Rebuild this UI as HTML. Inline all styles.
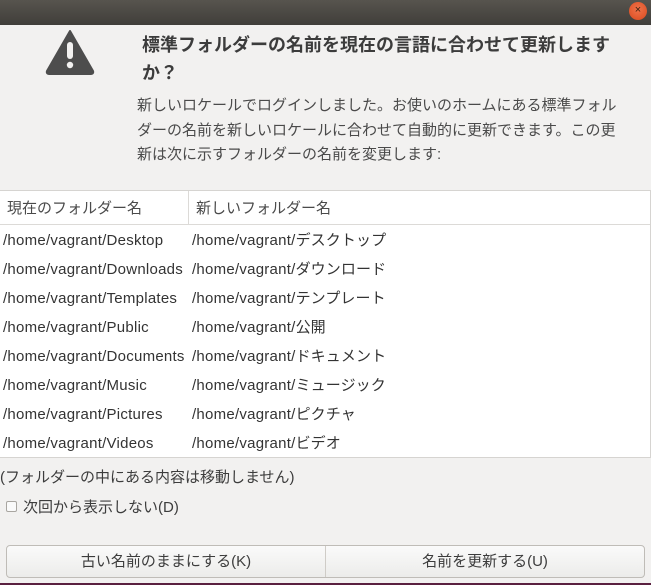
<!DOCTYPE html>
<html><head><meta charset="utf-8"><style>
*{margin:0;padding:0;box-sizing:border-box}
body{width:651px;height:585px;background:#f2f1f0;font-family:"Liberation Sans","Noto Sans CJK JP",sans-serif;color:#3c3c3c;position:relative;overflow:hidden}
.tb{position:absolute;left:0;top:0;width:651px;height:25px;background:linear-gradient(#57544e,#403e3a)}
.close{position:absolute;left:629px;top:2px;width:18px;height:18px;border-radius:50%;background:radial-gradient(circle at 50% 40%,#f0734a,#d9491e);color:#3a2010;font-size:11px;text-align:center;line-height:17px}
.t{position:absolute;font-size:15px;line-height:20px}
.title{position:absolute;left:142px;top:31px;font-size:18px;font-weight:bold;line-height:28px;color:#3c3c3c;white-space:nowrap}
.msg{position:absolute;left:137px;top:94px;font-size:15px;line-height:24.5px;white-space:nowrap;color:#4a4a4a}
.table{position:absolute;left:0;top:190px;width:651px;height:268px;background:#fff;border-top:1px solid #d6d4d1;border-bottom:1px solid #d6d4d1;border-right:1px solid #d6d4d1}
.hdr{height:34px;border-bottom:1px solid #dcdad7;position:relative}
.hdr span{position:absolute;top:8px;font-size:15px;line-height:20px;color:#4a4a4a}
.vd{position:absolute;left:188px;top:0;height:34px;border-left:1px solid #dcdad7}
.row{height:29px;position:relative;font-size:15px;letter-spacing:0.1px}
.row span{position:absolute;top:5px;line-height:20px;height:20px;color:#333;font-family:"Noto Sans CJK JP",sans-serif}
.row span b{font-weight:normal;font-family:"Liberation Sans",sans-serif;letter-spacing:0.25px}
.btns{position:absolute;left:6px;top:545px;width:639px;height:33px;border:1px solid #bfbcb7;border-radius:4px;background:linear-gradient(#fafafa,#ececea);display:flex}
.btns div{flex:1;text-align:center;line-height:31px;font-size:15px;color:#3c3c3c}
.btns div+div{border-left:1px solid #cfccc7}
.bot{position:absolute;left:0;top:583px;width:651px;height:2px;background:#5a2040}
</style></head><body>
<div class="tb"><div class="close">×</div></div>
<svg style="position:absolute;left:44px;top:29px" width="52" height="46" viewBox="0 0 52 46"><path d="M26 2 L49 42 Q50 45 46 45 L6 45 Q2 45 3 42 Z" fill="#4d4d4d" stroke="#4d4d4d" stroke-width="2" stroke-linejoin="round"/><rect x="23" y="13" width="6" height="17" rx="3" fill="#f2f1f0"/><circle cx="26" cy="36" r="3.2" fill="#f2f1f0"/></svg>
<div class="title">標準フォルダーの名前を現在の言語に合わせて更新します<br>か？</div>
<div class="msg">新しいロケールでログインしました。お使いのホームにある標準フォル<br>ダーの名前を新しいロケールに合わせて自動的に更新できます。この更<br>新は次に示すフォルダーの名前を変更します:</div>
<div class="table">
<div class="hdr"><span style="left:7px">現在のフォルダー名</span><div class="vd"></div><span style="left:196px">新しいフォルダー名</span></div>
<div class="row"><span style="left:3px"><b>/home/vagrant/Desktop</b></span><span style="left:192px"><b>/home/vagrant/</b>デスクトップ</span></div>
<div class="row"><span style="left:3px"><b>/home/vagrant/Downloads</b></span><span style="left:192px"><b>/home/vagrant/</b>ダウンロード</span></div>
<div class="row"><span style="left:3px"><b>/home/vagrant/Templates</b></span><span style="left:192px"><b>/home/vagrant/</b>テンプレート</span></div>
<div class="row"><span style="left:3px"><b>/home/vagrant/Public</b></span><span style="left:192px"><b>/home/vagrant/</b>公開</span></div>
<div class="row"><span style="left:3px"><b>/home/vagrant/Documents</b></span><span style="left:192px"><b>/home/vagrant/</b>ドキュメント</span></div>
<div class="row"><span style="left:3px"><b>/home/vagrant/Music</b></span><span style="left:192px"><b>/home/vagrant/</b>ミュージック</span></div>
<div class="row"><span style="left:3px"><b>/home/vagrant/Pictures</b></span><span style="left:192px"><b>/home/vagrant/</b>ピクチャ</span></div>
<div class="row"><span style="left:3px"><b>/home/vagrant/Videos</b></span><span style="left:192px"><b>/home/vagrant/</b>ビデオ</span></div>
</div>
<div class="t" style="left:0;top:468px">(フォルダーの中にある内容は移動しません)</div>
<div style="position:absolute;left:6px;top:501px;width:11px;height:11px;border:1px solid #a9a6a1;border-radius:2px;background:#fafafa"></div>
<div class="t" style="left:23px;top:498px">次回から表示しない(D)</div>
<div class="btns"><div>古い名前のままにする(K)</div><div>名前を更新する(U)</div></div>
<div class="bot"></div>
</body></html>
